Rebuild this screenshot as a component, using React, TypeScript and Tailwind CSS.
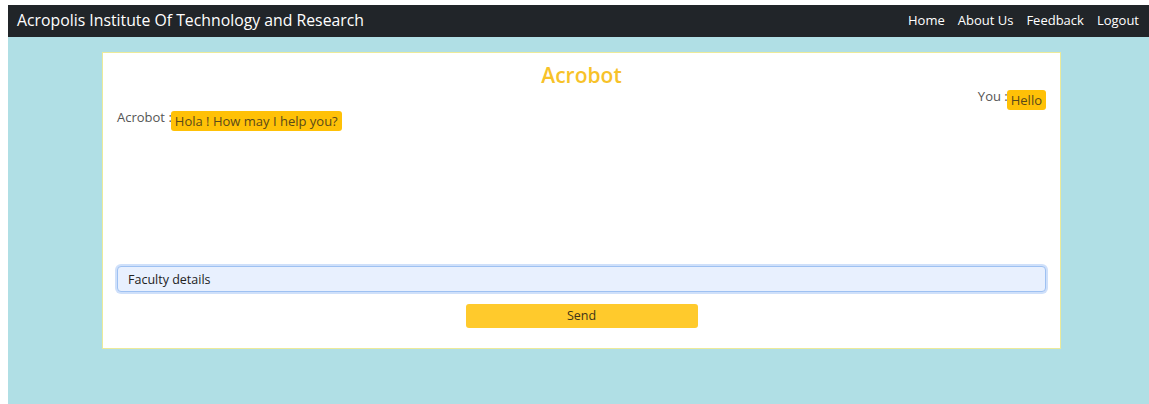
import React from "react"

const links = ["Home", "About Us", "Feedback", "Logout"]

function Bubble({ who, text }: { who: string; text: string }) {
  return (
    <div className="flex items-start text-[13px] text-[#555]">
      <span className="leading-[16px]">{who} :</span>
      <span className="-ml-[1px] mt-[2px] rounded-[3px] bg-[#ffc107] px-[4px] py-[2px] leading-[16px] text-[#5a4a1a]">
        {text}
      </span>
    </div>
  )
}

export default function App() {
  return (
    <div className="flex h-[404px] flex-col bg-white pl-[8px] pt-[5px] font-['Open_Sans',sans-serif]">
      <nav className="flex h-[32px] items-center justify-between bg-[#212529] pl-[9px] pr-[10px] text-white">
        <span className="text-[15.8px]">Acropolis Institute Of Technology and Research</span>
        <div className="flex gap-[13px] text-[13px]">
          {links.map((l) => (
            <a key={l} className="cursor-pointer">
              {l}
            </a>
          ))}
        </div>
      </nav>
      <main className="flex-1 bg-[#b0dfe5] pt-[15px]">
        <div className="ml-[94px] flex h-[297px] w-[959px] flex-col border border-[#ecea9a] bg-white px-[14px] pt-[8px]">
          <h2 className="text-center text-[21px] font-semibold leading-[28px] text-[#f7c229]">Acrobot</h2>
          <div className="flex h-[177px] flex-col">
            <div className="-mt-[1px] flex justify-end">
              <Bubble who="You" text="Hello" />
            </div>
            <div className="-mt-[1px]">
              <Bubble who="Acrobot" text="Hola ! How may I help you?" />
            </div>
          </div>
          <input
            readOnly
            value="Faculty details"
            className="h-[26px] w-full rounded-[4px] border border-[#9ec1f2] bg-[#e8f0fe] px-[10px] text-[12.5px] text-[#222] shadow-[0_0_0_2px_#cfe0fa] outline-none"
          />
          <div className="mt-[12px] flex justify-center">
            <button className="h-[24px] w-[232px] rounded-[3px] bg-[#ffca2c] text-[12.5px] text-[#3d3418]">Send</button>
          </div>
        </div>
      </main>
    </div>
  )
}
